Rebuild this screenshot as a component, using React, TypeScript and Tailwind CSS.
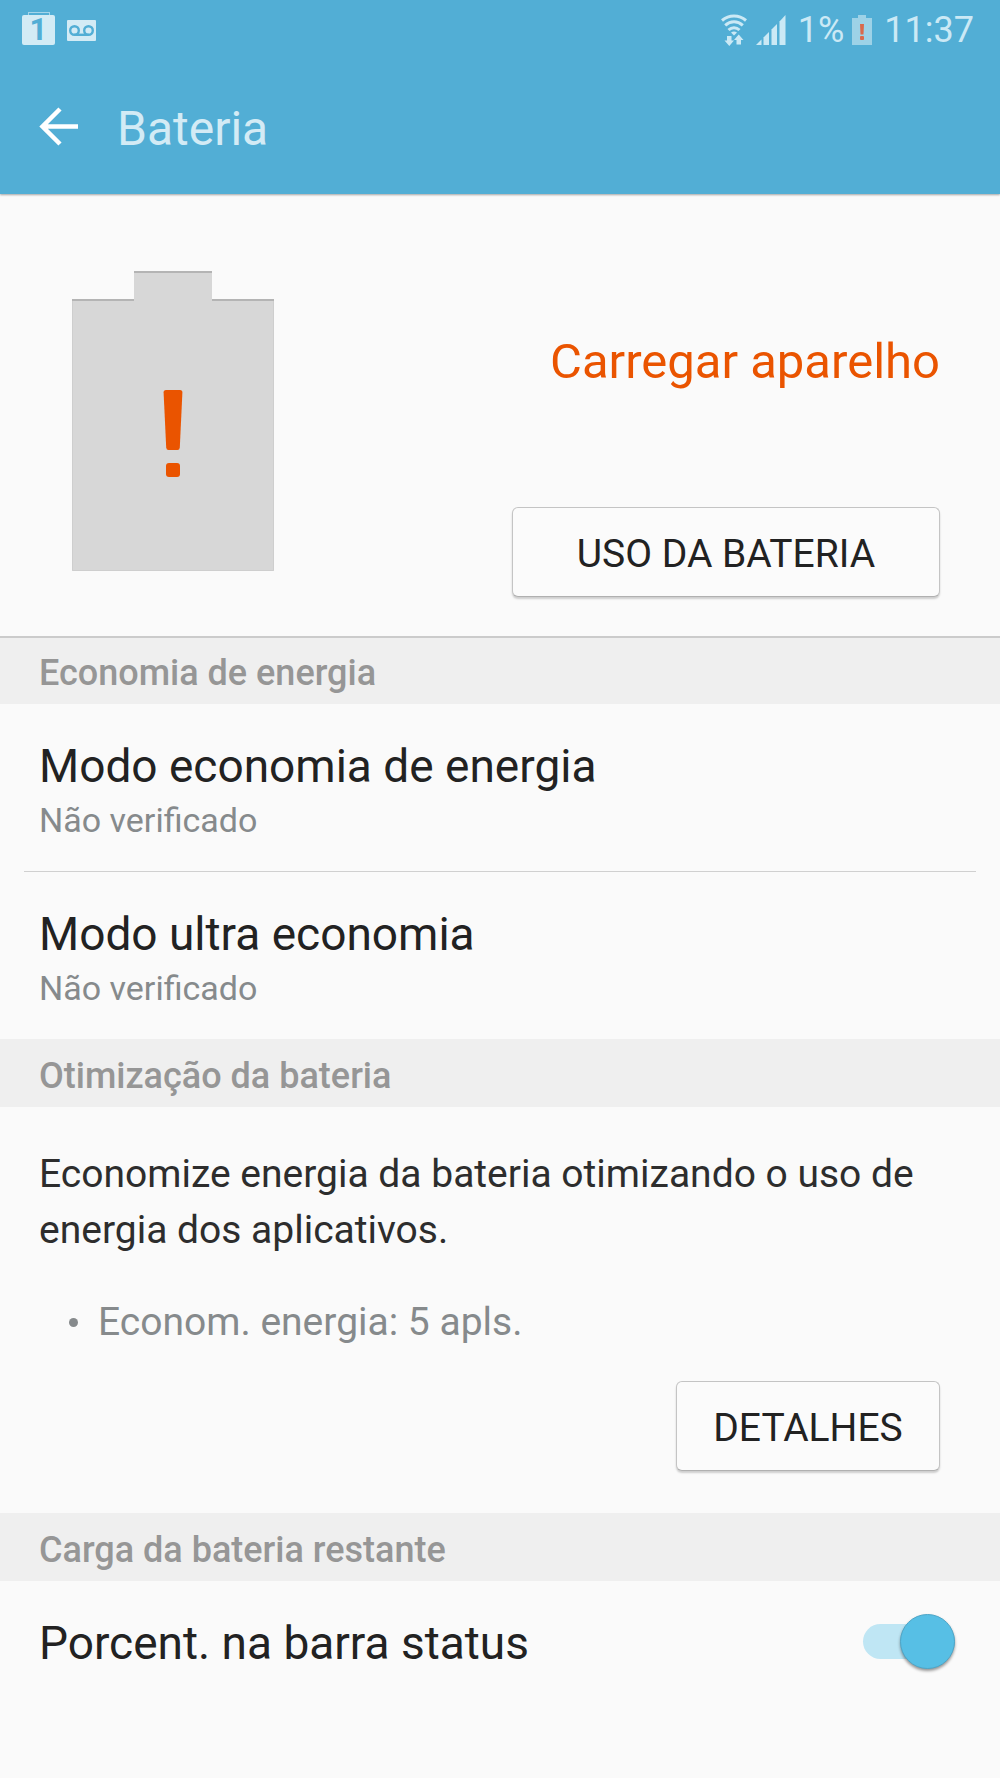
import React, { useState } from "react";

function WifiIcon() {
  return (
    <svg width="26" height="32" viewBox="0 0 26 32" fill="none" aria-label="Wi-Fi">
      <g stroke="#cbe9f5" strokeWidth="3">
        <path d="M1 6.5C8 0.5 18 0.5 25 6.5" />
        <path d="M4.2 11.300C9.5 6.500 16.500 6.500 21.800 11.300" />
        <path d="M7.500 16C10.700 13 15.300 13 18.500 16" />
      </g>
      <path d="M10 18.500Q13 16.500 16 18.500L13 21.500Z" fill="#cbe9f5" />
      <path d="M6 22h4.500v4.500h2.500L8.300 32 3.500 26.500H6Z" fill="#cbe9f5" />
      <path d="M15.500 30.500h4.500V26h2.500L17.700 20.500 13 26h2.500Z" fill="#cbe9f5" />
    </svg>
  );
}

function SignalIcon() {
  return (
    <svg width="30" height="30" viewBox="0 0 30 30" fill="#cbe9f5" aria-label="Sinal">
      <path d="M0 30L5.500 24.500V30Z" />
      <path d="M7.500 22.500L13 17V30H7.500Z" />
      <path d="M15.500 14.500L21 9V30H15.500Z" />
      <path d="M23.500 6.500L29.500 0V30H23.500Z" />
    </svg>
  );
}

function SmallBatteryIcon() {
  return (
    <svg width="20" height="30" viewBox="0 0 20 30" aria-label="Bateria fraca">
      <path d="M6 0H14V3H20V30H0V3H6Z" fill="#9dd2e7" />
      <path d="M8 9H12L11.500 19.500H8.500Z" fill="#d9694c" />
      <rect x="8" y="21" width="4" height="4" rx="1" fill="#d9694c" />
    </svg>
  );
}

function VoicemailIcon() {
  return (
    <svg width="29" height="21" viewBox="0 0 29 21" fill="none" aria-label="Correio de voz">
      <rect width="29" height="21" rx="1" fill="#d3ebf5" />
      <circle cx="7.500" cy="10.500" r="4.300" stroke="#52aed5" strokeWidth="2.400" />
      <circle cx="21.500" cy="10.500" r="4.300" stroke="#52aed5" strokeWidth="2.400" />
      <path d="M7.500 14.800H21.500" stroke="#52aed5" strokeWidth="2.400" />
    </svg>
  );
}

function BatteryArt() {
  return (
    <svg width="202" height="300" viewBox="0 0 202 300" className="shrink-0" aria-label="Bateria vazia">
      <path d="M62 0H140V28H202V300H0V28H62Z" fill="#d7d7d7" />
      <path d="M62 1H140M0 29H62M140 29H202" stroke="#b4b4b4" strokeWidth="2" />
      <path d="M0.500 30V299.500H201.500V30" fill="none" stroke="#cecece" />
      <path
        d="M94 119H108Q110.500 119 110.400 121.500L107.800 176.500Q107.600 179 105.500 179H96.500Q94.400 179 94.200 176.500L91.600 121.500Q91.500 119 94 119Z"
        fill="#ea5400"
      />
      <rect x="94" y="192" width="14" height="14" rx="3" fill="#ea5400" />
    </svg>
  );
}

function StatusBar() {
  return (
    <div className="flex h-[60px] items-center justify-between pr-[26px] pl-[22px] text-[36px] leading-none text-[#cbe9f5]">
      <div className="flex items-center gap-3">
        <div className="flex flex-col items-center pb-1">
          <div className="h-[3px] w-[22px] border-x border-t border-[#a5d5ea]" />
          <div className="flex h-[30px] w-[33px] items-center justify-center rounded-[2px] bg-[#d3ebf5] text-[31px] leading-none font-bold text-[#52aed5]">
            1
          </div>
        </div>
        <VoicemailIcon />
      </div>
      <div className="flex items-center">
        <WifiIcon />
        <div className="ml-[9px]">
          <SignalIcon />
        </div>
        <span className="ml-3">1%</span>
        <div className="ml-2">
          <SmallBatteryIcon />
        </div>
        <span className="ml-3">11:37</span>
      </div>
    </div>
  );
}

function SectionTitle({ children, first }: { children: React.ReactNode; first?: boolean }) {
  return (
    <h2
      className={
        "flex h-[68px] items-center bg-[#efefef] px-[39px] text-[36px] leading-none font-medium text-[#969696] " +
        (first ? "border-t-2 border-[#cbcbcb] pt-1" : "pt-1.5")
      }
    >
      {children}
    </h2>
  );
}

function ModeRow({ title, status }: { title: string; status: string }) {
  return (
    <button type="button" className="block w-full px-[39px] pt-8 pb-[27px] text-left">
      <span className="block text-[46px] leading-[60px] text-[#222222]">{title}</span>
      <span className="block text-[34px] leading-[48px] text-[#868a8c]">{status}</span>
    </button>
  );
}

function OutlineButton({ children, wide }: { children: React.ReactNode; wide?: boolean }) {
  return (
    <button
      type="button"
      className={
        "h-[90px] rounded-[6px] border border-[#c4c4c4] border-b-[#b0b0b0] bg-[#fbfbfb] pt-1 text-[39px] leading-none text-[#222222] shadow-[0_2px_2px_rgba(0,0,0,0.18)] " +
        (wide ? "w-[428px]" : "w-[264px]")
      }
    >
      {children}
    </button>
  );
}

export default function App() {
  const [showPercent, setShowPercent] = useState(true);

  return (
    <div className="min-h-screen bg-[#fafafa] font-['Roboto',sans-serif]">
      <header className="bg-[#52aed5] shadow-[0_1px_2px_rgba(0,0,0,0.35)]">
        <StatusBar />
        <div className="flex h-[134px] items-center gap-[38px] pl-[39px]">
          <button type="button" aria-label="Voltar">
            <svg width="40" height="40" viewBox="0 0 40 40" fill="none" stroke="#ffffff" strokeWidth="4.500">
              <path d="M39 19.500H4M21 2L3.500 19.500 21 37" />
            </svg>
          </button>
          <h1 className="pt-1 text-[48px] leading-none text-[#d3ebf5]">Bateria</h1>
        </div>
      </header>

      <main>
        <section className="flex items-start justify-between pt-[77px] pr-[60px] pb-[39px] pl-[72px]">
          <BatteryArt />
          <div className="flex flex-col items-end gap-[115px] pt-[61px]">
            <p className="text-[49px] leading-[60px] text-[#ea5400]">Carregar aparelho</p>
            <OutlineButton wide>USO DA BATERIA</OutlineButton>
          </div>
        </section>

        <section>
          <SectionTitle first>Economia de energia</SectionTitle>
          <ModeRow title="Modo economia de energia" status="Não verificado" />
          <hr className="mx-6 border-[#d0d0d0]" />
          <ModeRow title="Modo ultra economia" status="Não verificado" />
        </section>

        <section>
          <SectionTitle>Otimização da bateria</SectionTitle>
          <div className="pt-[39px] pr-[60px] pb-[42px] pl-[39px]">
            <p className="text-[39px] leading-[56px] text-[#2d2d2d]">
              Economize energia da bateria otimizando o uso de energia dos aplicativos.
            </p>
            <ul className="mt-9 pl-[30px] text-[39px] leading-[56px] text-[#868a8c]">
              <li className="flex items-center gap-5">
                <span className="size-[9px] rounded-full bg-[#868a8c]" />
                Econom. energia: 5 apls.
              </li>
            </ul>
            <div className="mt-[31px] flex justify-end">
              <OutlineButton>DETALHES</OutlineButton>
            </div>
          </div>
        </section>

        <section>
          <SectionTitle>Carga da bateria restante</SectionTitle>
          <div className="flex h-[120px] items-center justify-between pr-[45px] pl-[39px]">
            <label htmlFor="percent" className="pt-1 text-[46px] leading-[60px] text-[#222222]">
              Porcent. na barra status
            </label>
            <input
              id="percent"
              type="checkbox"
              role="switch"
              checked={showPercent}
              onChange={(e) => setShowPercent(e.target.checked)}
              className="flex h-[35px] w-[92px] cursor-pointer appearance-none items-center justify-start rounded-full bg-[#d5d5d5] before:size-[55px] before:shrink-0 before:rounded-full before:border before:border-[#4da6c8] before:bg-[#57bfe5] before:shadow-[0_2px_3px_rgba(0,0,0,0.4)] before:content-[''] checked:justify-end checked:bg-[#bfe6f4]"
            />
          </div>
        </section>
      </main>
    </div>
  );
}
